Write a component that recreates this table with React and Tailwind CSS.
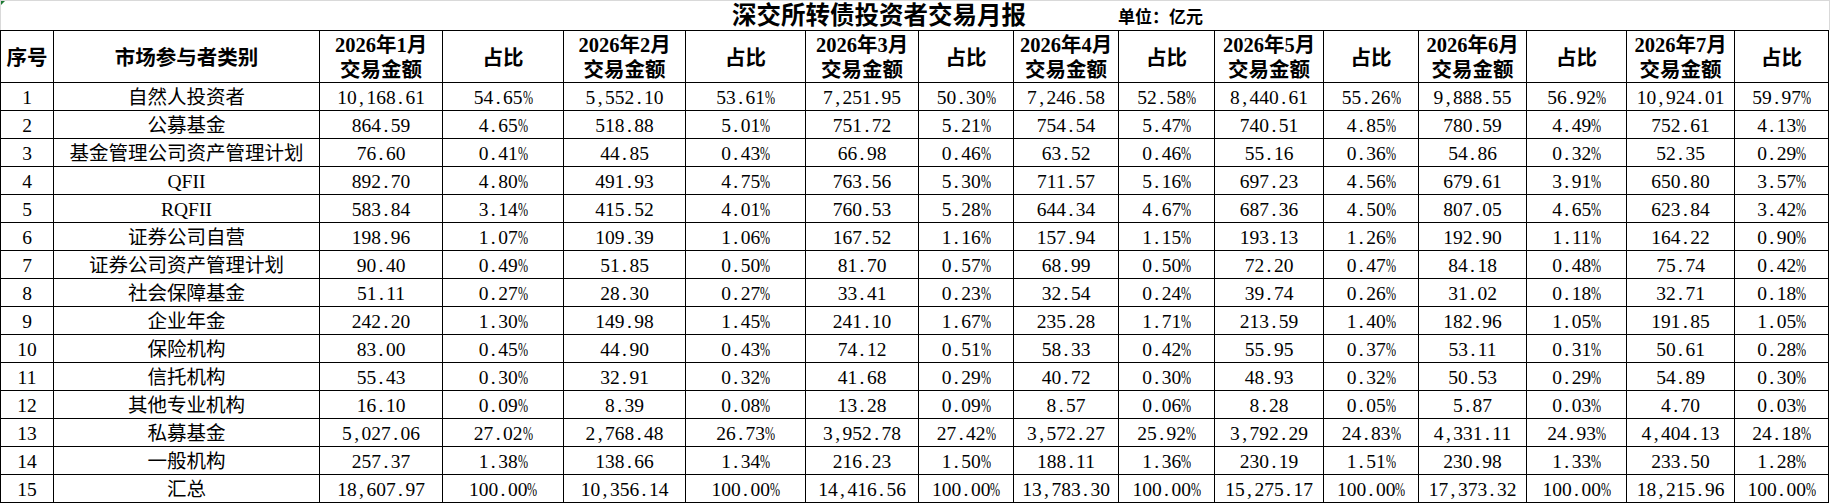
import React from 'react';

const months = ['1', '2', '3', '4', '5', '6', '7'];

const rows = [
  ['1', '自然人投资者', '10,168.61', '54.65%', '5,552.10', '53.61%', '7,251.95', '50.30%', '7,246.58', '52.58%', '8,440.61', '55.26%', '9,888.55', '56.92%', '10,924.01', '59.97%'],
  ['2', '公募基金', '864.59', '4.65%', '518.88', '5.01%', '751.72', '5.21%', '754.54', '5.47%', '740.51', '4.85%', '780.59', '4.49%', '752.61', '4.13%'],
  ['3', '基金管理公司资产管理计划', '76.60', '0.41%', '44.85', '0.43%', '66.98', '0.46%', '63.52', '0.46%', '55.16', '0.36%', '54.86', '0.32%', '52.35', '0.29%'],
  ['4', 'QFII', '892.70', '4.80%', '491.93', '4.75%', '763.56', '5.30%', '711.57', '5.16%', '697.23', '4.56%', '679.61', '3.91%', '650.80', '3.57%'],
  ['5', 'RQFII', '583.84', '3.14%', '415.52', '4.01%', '760.53', '5.28%', '644.34', '4.67%', '687.36', '4.50%', '807.05', '4.65%', '623.84', '3.42%'],
  ['6', '证券公司自营', '198.96', '1.07%', '109.39', '1.06%', '167.52', '1.16%', '157.94', '1.15%', '193.13', '1.26%', '192.90', '1.11%', '164.22', '0.90%'],
  ['7', '证券公司资产管理计划', '90.40', '0.49%', '51.85', '0.50%', '81.70', '0.57%', '68.99', '0.50%', '72.20', '0.47%', '84.18', '0.48%', '75.74', '0.42%'],
  ['8', '社会保障基金', '51.11', '0.27%', '28.30', '0.27%', '33.41', '0.23%', '32.54', '0.24%', '39.74', '0.26%', '31.02', '0.18%', '32.71', '0.18%'],
  ['9', '企业年金', '242.20', '1.30%', '149.98', '1.45%', '241.10', '1.67%', '235.28', '1.71%', '213.59', '1.40%', '182.96', '1.05%', '191.85', '1.05%'],
  ['10', '保险机构', '83.00', '0.45%', '44.90', '0.43%', '74.12', '0.51%', '58.33', '0.42%', '55.95', '0.37%', '53.11', '0.31%', '50.61', '0.28%'],
  ['11', '信托机构', '55.43', '0.30%', '32.91', '0.32%', '41.68', '0.29%', '40.72', '0.30%', '48.93', '0.32%', '50.53', '0.29%', '54.89', '0.30%'],
  ['12', '其他专业机构', '16.10', '0.09%', '8.39', '0.08%', '13.28', '0.09%', '8.57', '0.06%', '8.28', '0.05%', '5.87', '0.03%', '4.70', '0.03%'],
  ['13', '私募基金', '5,027.06', '27.02%', '2,768.48', '26.73%', '3,952.78', '27.42%', '3,572.27', '25.92%', '3,792.29', '24.83%', '4,331.11', '24.93%', '4,404.13', '24.18%'],
  ['14', '一般机构', '257.37', '1.38%', '138.66', '1.34%', '216.23', '1.50%', '188.11', '1.36%', '230.19', '1.51%', '230.98', '1.33%', '233.50', '1.28%'],
  ['15', '汇总', '18,607.97', '100.00%', '10,356.14', '100.00%', '14,416.56', '100.00%', '13,783.30', '100.00%', '15,275.17', '100.00%', '17,373.32', '100.00%', '18,215.96', '100.00%'],
];

// half-width punctuation like the sheet's font: every char takes half an em
const Num = ({ v }) =>
  v.split(/([,.%])/).map((part, i) => {
    if (part === ',' || part === '.') {
      return (
        <span key={i} className="inline-block w-[0.5em] text-center">
          {part}
        </span>
      );
    }
    if (part === '%') {
      return (
        <span key={i} className="inline-block w-[0.5em]">
          <span className="inline-block origin-left scale-x-[0.62]">%</span>
        </span>
      );
    }
    return part;
  });

const cell = 'flex items-center justify-center border-r border-b border-black';

export default function App() {
  return (
    <div className="w-[1831px] h-[503px] bg-white text-black font-['Liberation_Serif','Noto_Sans_CJK_SC',serif]">
      {/* title line */}
      <div className="relative flex items-end h-[30px] w-[1830px] border-t border-l border-r border-[#d9d9d9]">
        <div className="absolute left-0 top-0 w-0 h-0 border-t-[4px] border-r-[4px] border-t-[#1e7b34] border-r-transparent" />
        <div className="ml-[731px] text-[24.5px] leading-[28px] font-bold">深交所转债投资者交易月报</div>
        <div className="ml-[92px] text-[17px] leading-[24px] font-bold">单位：亿元</div>
      </div>

      {/* table */}
      <div className="grid grid-cols-[53px_266px_123px_121px_122px_120px_113px_95px_105px_96px_109px_95px_108px_100px_108px_94px] w-[1829px] border-l border-t border-black">
        <div className={`${cell} h-[52px] text-[20.5px] font-bold pt-[4px]`}>序号</div>
        <div className={`${cell} h-[52px] text-[20.5px] font-bold pt-[4px]`}>市场参与者类别</div>
        {months.map((m) => (
          <React.Fragment key={m}>
            <div className={`${cell} flex-col h-[52px] text-[20.5px] leading-[25px] font-bold pt-[2px]`}>
              <span>2026年{m}月</span>
              <span>交易金额</span>
            </div>
            <div className={`${cell} h-[52px] text-[20.5px] font-bold pt-[4px]`}>占比</div>
          </React.Fragment>
        ))}

        {rows.map((r) =>
          r.map((v, j) => (
            <div key={`${r[0]}-${j}`} className={`${cell} h-[28px] text-[19.5px] leading-[28px] pt-[3px] whitespace-nowrap`}>
              {j < 2 ? v : <Num v={v} />}
            </div>
          ))
        )}
      </div>
    </div>
  );
}
